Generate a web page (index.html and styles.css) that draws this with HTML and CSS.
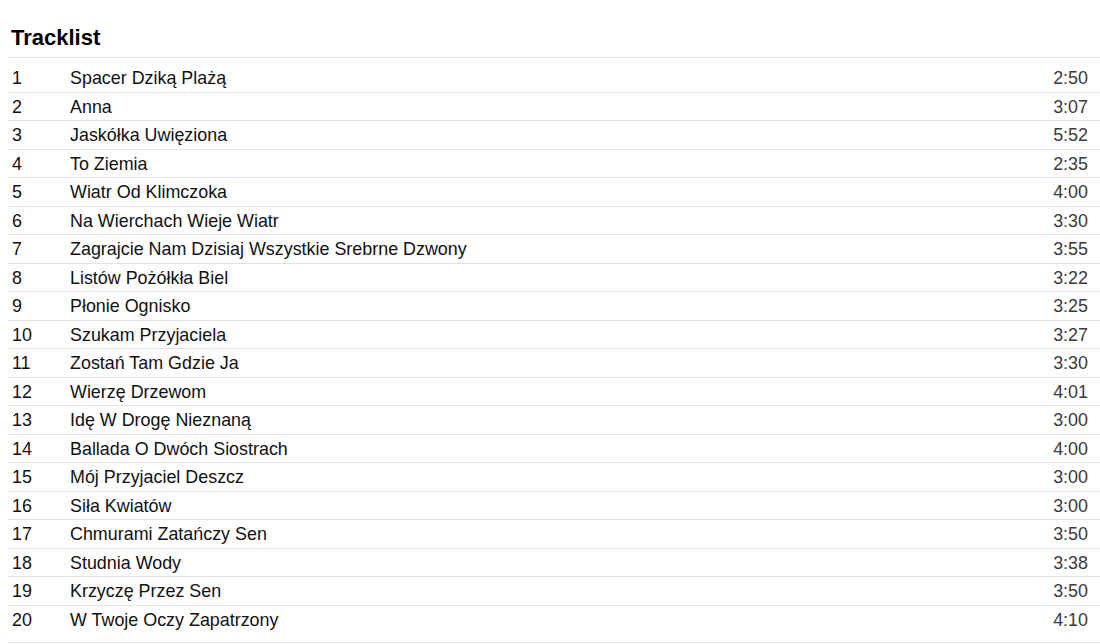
FILE: index.html
```html
<!DOCTYPE html>
<html lang="pl">
<head>
<meta charset="utf-8">
<title>Tracklist</title>
<link rel="stylesheet" href="styles.css">
</head>
<body>
<section class="tracklist">
  <h2 class="title">Tracklist</h2>
  <div class="list">
    <div class="row"><span class="num">1</span><span class="name">Spacer Dziką Plażą</span><span class="dur">2:50</span></div>
    <div class="row"><span class="num">2</span><span class="name">Anna</span><span class="dur">3:07</span></div>
    <div class="row"><span class="num">3</span><span class="name">Jaskółka Uwięziona</span><span class="dur">5:52</span></div>
    <div class="row"><span class="num">4</span><span class="name">To Ziemia</span><span class="dur">2:35</span></div>
    <div class="row"><span class="num">5</span><span class="name">Wiatr Od Klimczoka</span><span class="dur">4:00</span></div>
    <div class="row"><span class="num">6</span><span class="name">Na Wierchach Wieje Wiatr</span><span class="dur">3:30</span></div>
    <div class="row"><span class="num">7</span><span class="name">Zagrajcie Nam Dzisiaj Wszystkie Srebrne Dzwony</span><span class="dur">3:55</span></div>
    <div class="row"><span class="num">8</span><span class="name">Listów Pożółkła Biel</span><span class="dur">3:22</span></div>
    <div class="row"><span class="num">9</span><span class="name">Płonie Ognisko</span><span class="dur">3:25</span></div>
    <div class="row"><span class="num">10</span><span class="name">Szukam Przyjaciela</span><span class="dur">3:27</span></div>
    <div class="row"><span class="num">11</span><span class="name">Zostań Tam Gdzie Ja</span><span class="dur">3:30</span></div>
    <div class="row"><span class="num">12</span><span class="name">Wierzę Drzewom</span><span class="dur">4:01</span></div>
    <div class="row"><span class="num">13</span><span class="name">Idę W Drogę Nieznaną</span><span class="dur">3:00</span></div>
    <div class="row"><span class="num">14</span><span class="name">Ballada O Dwóch Siostrach</span><span class="dur">4:00</span></div>
    <div class="row"><span class="num">15</span><span class="name">Mój Przyjaciel Deszcz</span><span class="dur">3:00</span></div>
    <div class="row"><span class="num">16</span><span class="name">Siła Kwiatów</span><span class="dur">3:00</span></div>
    <div class="row"><span class="num">17</span><span class="name">Chmurami Zatańczy Sen</span><span class="dur">3:50</span></div>
    <div class="row"><span class="num">18</span><span class="name">Studnia Wody</span><span class="dur">3:38</span></div>
    <div class="row"><span class="num">19</span><span class="name">Krzyczę Przez Sen</span><span class="dur">3:50</span></div>
    <div class="row"><span class="num">20</span><span class="name">W Twoje Oczy Zapatrzony</span><span class="dur">4:10</span></div>
  </div>
</section>
</body>
</html>
```

FILE: styles.css
```css
html, body {
  margin: 0;
  padding: 0;
  background: #ffffff;
}

body {
  font-family: "Liberation Sans", Arial, sans-serif;
  color: #111111;
  overflow: hidden;
}

.tracklist {
  margin-left: 8px;
  width: 1092px;
}

.title {
  margin: 0;
  padding: 25px 0 7px 3px;
  font-size: 22px;
  line-height: 25px;
  font-weight: bold;
  color: #000000;
  border-bottom: 1px solid #e2e2e2;
}

.list {
  padding: 6px 0 9px;
  border-bottom: 1px solid #e2e2e2;
}

.row {
  display: grid;
  grid-template-columns: 58px 1fr auto;
  padding: 4px 12px 3.5px 4px;
  font-size: 17.9px;
  line-height: 20px;
  border-bottom: 1px solid #e2e2e2;
}

.row:last-child {
  border-bottom: none;
}

.name {
  color: #111111;
}

.dur {
  color: #3a3a3a;
  text-align: right;
}
```
